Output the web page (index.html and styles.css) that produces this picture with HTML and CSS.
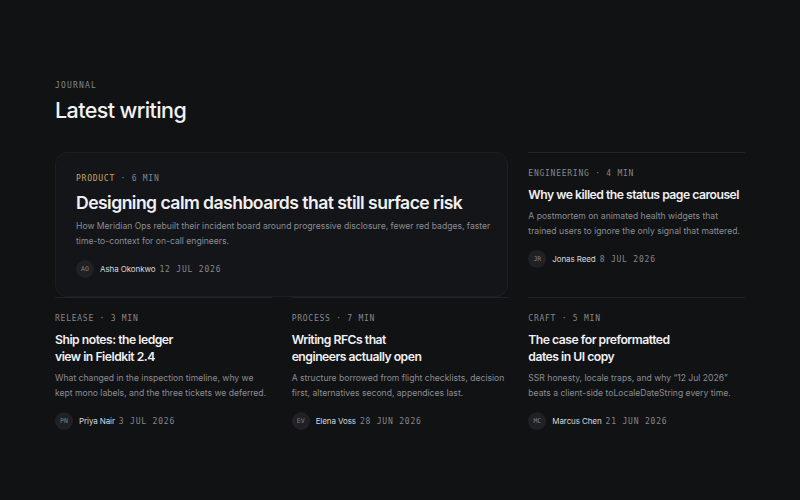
FILE: index.html
```html
<!DOCTYPE html>
<html lang="en">
<head>
  <meta charset="UTF-8" />
  <meta name="viewport" content="width=device-width, initial-scale=1.0" />
  <title>Journal - Latest writing</title>
  <link rel="stylesheet" href="styles.css">
</head>
<body>

<main class="journal">
  <header class="journal-head">
    <p class="eyebrow">JOURNAL</p>
    <h1 class="page-title">Latest writing</h1>
  </header>

  <section class="post-grid">
    <!-- Destacado -->
    <article class="post post-featured">
      <p class="post-tag"><span class="tag-accent">PRODUCT</span> · 6 MIN</p>
      <h2 class="post-title">Designing calm dashboards that still surface risk</h2>
      <p class="post-desc">How Meridian Ops rebuilt their incident board around progressive disclosure, fewer red badges, faster time-to-context for on-call engineers.</p>
      <div class="post-meta">
        <span class="avatar">AO</span>
        <span class="author">Asha Okonkwo</span>
        <span class="date">12 JUL 2026</span>
      </div>
    </article>

    <article class="post">
      <p class="post-tag">ENGINEERING · 4 MIN</p>
      <h2 class="post-title">Why we killed the status page carousel</h2>
      <p class="post-desc">A postmortem on animated health widgets that trained users to ignore the only signal that mattered.</p>
      <div class="post-meta">
        <span class="avatar">JR</span>
        <span class="author">Jonas Reed</span>
        <span class="date">8 JUL 2026</span>
      </div>
    </article>

    <article class="post">
      <p class="post-tag">RELEASE · 3 MIN</p>
      <h2 class="post-title">Ship notes: the ledger view in Fieldkit 2.4</h2>
      <p class="post-desc">What changed in the inspection timeline, why we kept mono labels, and the three tickets we deferred.</p>
      <div class="post-meta">
        <span class="avatar">PN</span>
        <span class="author">Priya Nair</span>
        <span class="date">3 JUL 2026</span>
      </div>
    </article>

    <article class="post">
      <p class="post-tag">PROCESS · 7 MIN</p>
      <h2 class="post-title">Writing RFCs that engineers actually open</h2>
      <p class="post-desc">A structure borrowed from flight checklists, decision first, alternatives second, appendices last.</p>
      <div class="post-meta">
        <span class="avatar">EV</span>
        <span class="author">Elena Voss</span>
        <span class="date">28 JUN 2026</span>
      </div>
    </article>

    <article class="post">
      <p class="post-tag">CRAFT · 5 MIN</p>
      <h2 class="post-title">The case for preformatted dates in UI copy</h2>
      <p class="post-desc">SSR honesty, locale traps, and why “12 Jul 2026” beats a client-side toLocaleDateString every time.</p>
      <div class="post-meta">
        <span class="avatar">MC</span>
        <span class="author">Marcus Chen</span>
        <span class="date">21 JUN 2026</span>
      </div>
    </article>
  </section>
</main>

</body>
</html>
```

FILE: styles.css
```css
html, body {
  margin: 0;
  padding: 0;
  height: 100%;
  background: #111214;
  font-family: Inter, "Noto Sans", sans-serif;
  color: #ececee;
}

.journal {
  padding: 80px 55px 0;
}

.eyebrow {
  margin: 0;
  font-family: "DejaVu Sans Mono", monospace;
  font-size: 8px;
  line-height: 12px;
  letter-spacing: 1.2px;
  color: #85878c;
}

.page-title {
  margin: 4px 0 0;
  font-size: 21.5px;
  line-height: 28px;
  font-weight: 500;
  letter-spacing: -0.6px;
  color: #f2f2f4;
}

.post-grid {
  display: grid;
  grid-template-columns: repeat(3, 1fr);
  column-gap: 20px;
  margin-top: 28px;
}

.post {
  border-top: 1px solid #232428;
  padding: 15px 0 0;
}

.post-featured {
  grid-column: span 2;
  border: 1px solid #1d1e21;
  border-radius: 12px;
  background: #141518;
  padding: 20px 14px 18px 20px;
}

.post-tag {
  margin: 0 0 6px;
  font-family: "DejaVu Sans Mono", monospace;
  font-size: 8px;
  line-height: 12px;
  letter-spacing: 0.75px;
  color: #85878c;
}

.tag-accent {
  color: #c9a35f;
}

.post-title {
  margin: 0 0 6px;
  font-size: 12.2px;
  line-height: 17px;
  font-weight: 600;
  letter-spacing: -0.5px;
  color: #f0f0f2;
  text-wrap: balance;
}

.post-featured .post-title {
  margin: 0 0 4px;
  font-size: 17.6px;
  line-height: 24px;
  letter-spacing: -0.55px;
  text-wrap: wrap;
}

.post-desc {
  margin: 0 0 12px;
  font-size: 8.6px;
  line-height: 14.5px;
  color: #8b8d93;
}

.post-meta {
  display: flex;
  align-items: center;
  gap: 6px;
}

.avatar {
  width: 18px;
  height: 18px;
  border-radius: 50%;
  background: #202125;
  display: flex;
  align-items: center;
  justify-content: center;
  font-family: "DejaVu Sans Mono", monospace;
  font-size: 6.5px;
  color: #7f8186;
}

.author {
  font-size: 8px;
  letter-spacing: -0.1px;
  color: #d8d9dc;
}

.date {
  margin-left: -2px;
  font-family: "DejaVu Sans Mono", monospace;
  font-size: 8px;
  letter-spacing: 0.8px;
  color: #85878c;
}
```
